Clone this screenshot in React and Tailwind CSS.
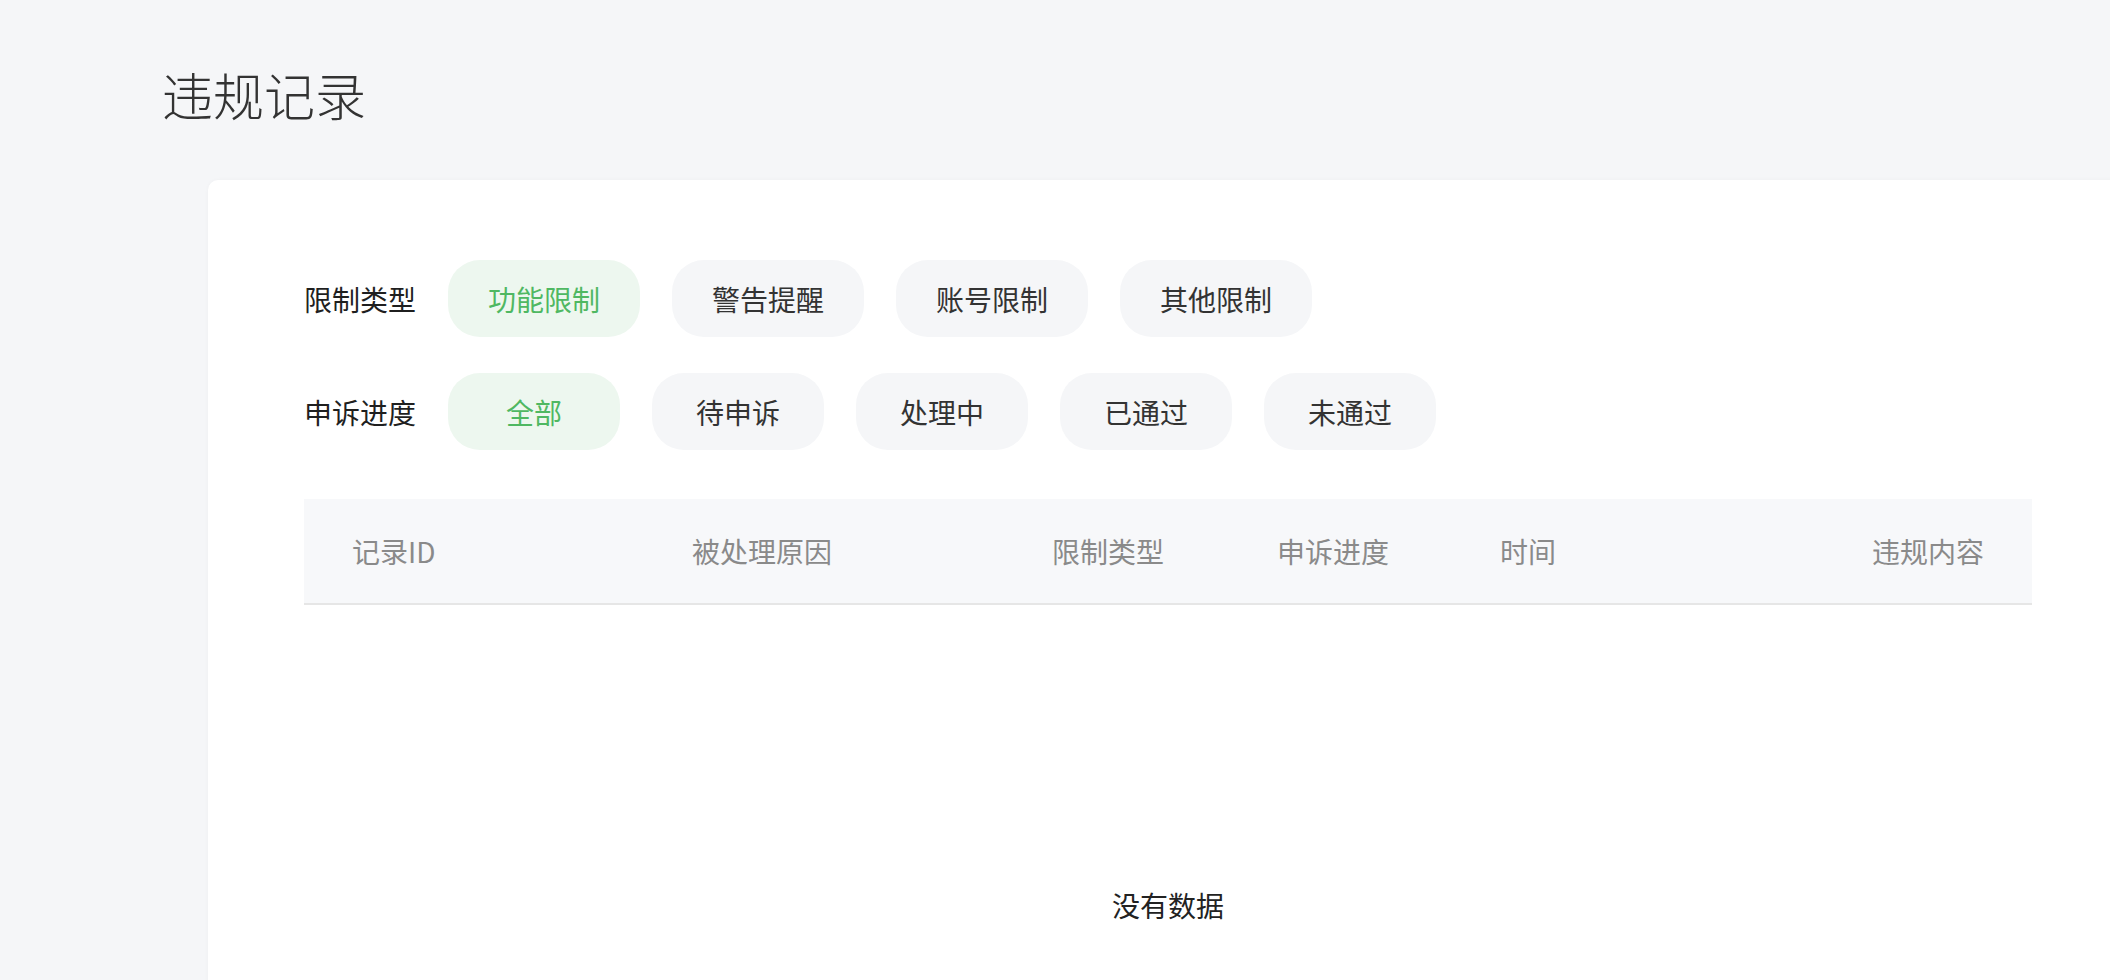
import React from "react";

const font = { fontFamily: '"Noto Sans CJK SC", "Noto Sans", sans-serif' };

function Pill({ label, active }) {
  return (
    <div
      className={
        active
          ? "flex h-[77px] min-w-[172px] items-center justify-center rounded-[32px] bg-[#edf7ef] px-[40px] text-[28px] leading-none text-[#4fb862]"
          : "flex h-[77px] min-w-[172px] items-center justify-center rounded-[32px] bg-[#f5f6f8] px-[40px] text-[28px] leading-none text-[#333333]"
      }
    >
      {label}
    </div>
  );
}

function FilterRow({ title, items, className }) {
  return (
    <div className={"flex items-center " + (className || "")}>
      <div className="w-[144px] text-[28px] leading-none text-[#1f1f1f]">{title}</div>
      <div className="flex gap-[32px]">
        {items.map((it, i) => (
          <Pill key={it} label={it} active={i === 0} />
        ))}
      </div>
    </div>
  );
}

export default function App() {
  return (
    <div className="h-[980px] w-[2110px] overflow-hidden bg-[#f5f6f8]" style={font}>
      <h1 className="pl-[162px] pt-[69px] text-[51px] font-light leading-none text-[#333333]">违规记录</h1>
      <div className="ml-[208px] mt-[60px] h-[900px] w-[1920px] rounded-[10px] bg-white pl-[96px] pt-[80px] shadow-[0_0_4px_rgba(0,0,0,0.03)]">
        <FilterRow title="限制类型" items={["功能限制", "警告提醒", "账号限制", "其他限制"]} />
        <FilterRow
          className="mt-[36px]"
          title="申诉进度"
          items={["全部", "待申诉", "处理中", "已通过", "未通过"]}
        />
        <div className="mt-[49px] w-[1728px]">
          <div className="flex h-[106px] items-center border-b-2 border-[#e6e6e6] bg-[#f7f8fa] text-[28px] leading-none text-[#8a8a8a]">
            <div className="w-[340px] pl-[48px]">记录ID</div>
            <div className="w-[360px] pl-[48px]">被处理原因</div>
            <div className="w-[225px] pl-[48px]">限制类型</div>
            <div className="w-[223px] pl-[48px]">申诉进度</div>
            <div className="flex-1 pl-[48px]">时间</div>
            <div className="pr-[48px] text-right">违规内容</div>
          </div>
          <div className="pt-[279px] text-center text-[28px] leading-[42px] text-[#222222]">没有数据</div>
        </div>
      </div>
    </div>
  );
}
